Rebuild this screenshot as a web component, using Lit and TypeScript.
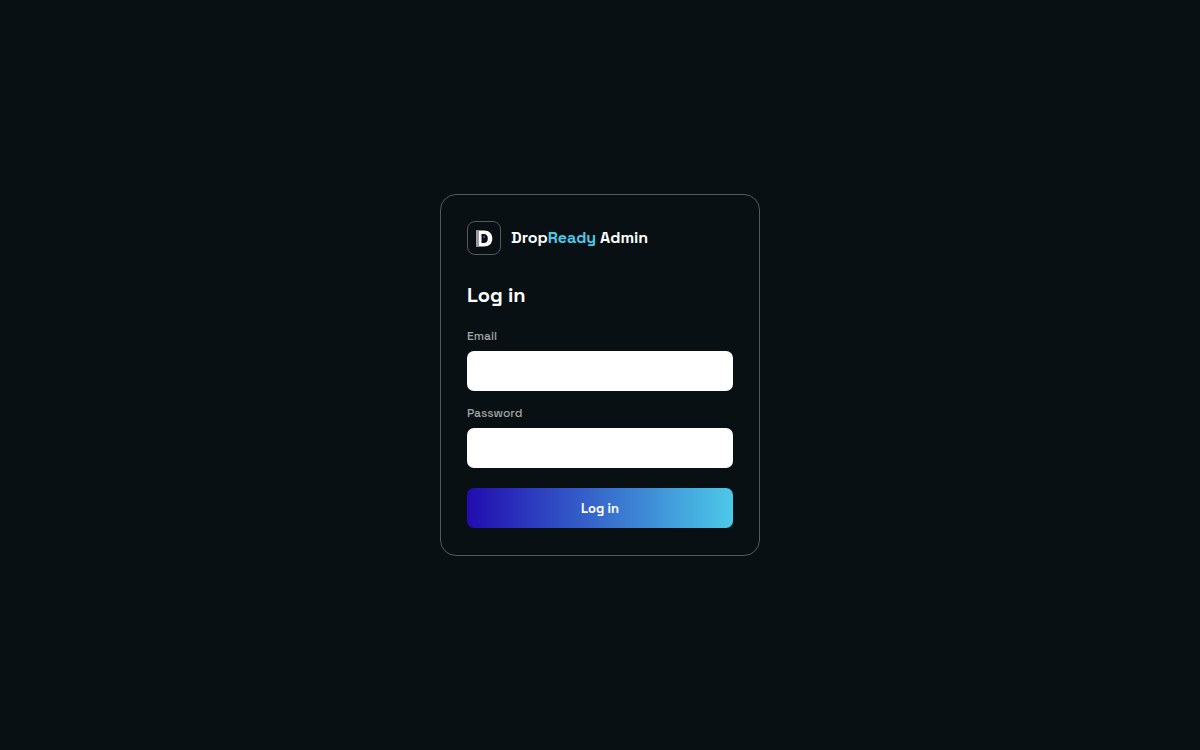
import { LitElement, html, css } from "lit";
import { customElement } from "lit/decorators.js";

@customElement("app-root")
export class AppRoot extends LitElement {
  static styles = css`
    :host {
      display: flex;
      align-items: center;
      justify-content: center;
      min-height: 100vh;
      background: #081013;
      color: #fff;
      font-family: "Space Grotesk", Inter, sans-serif;
    }
    * {
      box-sizing: border-box;
    }
    .card {
      width: 100%;
      max-width: 320px;
      padding: 26px 26px 27px;
      border: 1px solid #535a5c;
      border-radius: 16px;
    }
    .brand {
      display: flex;
      align-items: center;
      gap: 10px;
      font-size: 16px;
      line-height: 24px;
      font-weight: 700;
    }
    .logo {
      display: block;
      width: 34px;
      height: 34px;
      flex: none;
    }
    .accent {
      color: #4cc9e8;
    }
    .title {
      margin: 26px 0 19px;
      font-size: 20px;
      line-height: 28px;
      font-weight: 700;
    }
    .field {
      display: flex;
      flex-direction: column;
      gap: 7px;
      margin-bottom: 14px;
    }
    .field.last {
      margin-bottom: 20px;
    }
    .label {
      font-size: 12px;
      line-height: 16px;
      font-weight: 500;
      color: #a1a5a6;
    }
    .input {
      width: 100%;
      height: 40px;
      padding: 0 12px;
      border: 0;
      border-radius: 7px;
      background: #fff;
      color: #081013;
      font: inherit;
    }
    .submit {
      display: block;
      width: 100%;
      height: 40px;
      border: 0;
      border-radius: 7px;
      background: linear-gradient(90deg, #220cb0, #4cc9e8);
      color: #fff;
      font-family: inherit;
      font-size: 13px;
      font-weight: 700;
      cursor: pointer;
    }
  `;

  render() {
    return html`
      <form class="card" @submit=${(e: Event) => e.preventDefault()}>
        <div class="brand">
          <svg class="logo" viewBox="0 0 34 34" aria-hidden="true">
            <rect x="0.5" y="0.5" width="33" height="33" rx="7.5" fill="#081013" stroke="#535a5c" />
            <path
              fill="#fff"
              fill-rule="evenodd"
              d="M9 9.500H17c5.200 0 8.300 3 8.300 8s-3.100 8-8.300 8H9zM14.500 13v9h2c3 0 4.300-1.500 4.300-4.500s-1.300-4.500-4.300-4.500z"
            />
            <rect x="9" y="9.500" width="3" height="16" fill="#999da0" />
            <rect x="16" y="15" width="2" height="2" fill="#2b4cb0" />
          </svg>
          <span>Drop<span class="accent">Ready</span> Admin</span>
        </div>
        <h1 class="title">Log in</h1>
        <div class="field">
          <label class="label" for="email">Email</label>
          <input class="input" id="email" type="email" autocomplete="email" />
        </div>
        <div class="field last">
          <label class="label" for="password">Password</label>
          <input class="input" id="password" type="password" autocomplete="current-password" />
        </div>
        <button class="submit" type="submit">Log in</button>
      </form>
    `;
  }
}
